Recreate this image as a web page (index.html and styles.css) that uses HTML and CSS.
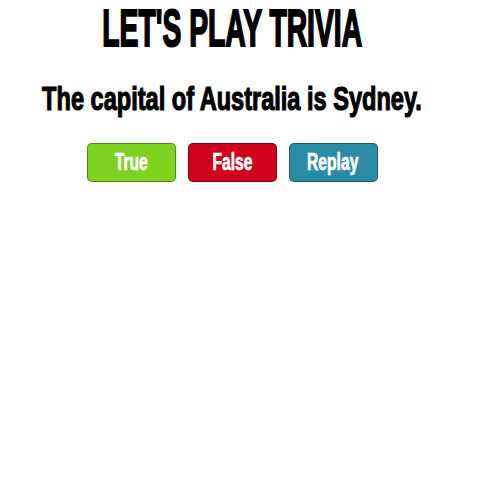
FILE: index.html
```html
<!DOCTYPE html>
<html>
<head>
<meta charset="utf-8">
<link rel="stylesheet" href="styles.css">
</head>
<body>
<main class="game">
  <h1 class="title"><span class="squeeze">LET'S PLAY TRIVIA</span></h1>
  <p class="question"><span class="squeeze">The capital of Australia is Sydney.</span></p>
  <div class="actions">
    <button class="btn btn-true"><span class="squeeze">True</span></button>
    <button class="btn btn-false"><span class="squeeze">False</span></button>
    <button class="btn btn-replay"><span class="squeeze">Replay</span></button>
  </div>
</main>
</body>
</html>
```
FILE: styles.css
```css
html, body {
  margin: 0;
  padding: 0;
  background: #fff;
}
body {
  font-family: "Liberation Sans Narrow", "Liberation Sans", sans-serif;
  font-weight: bold;
}
.game {
  width: 464px;
  padding-top: 4px;
}
.squeeze {
  display: inline-block;
  transform: scaleX(0.7);
  transform-origin: center;
  white-space: nowrap;
}
.title {
  margin: 0;
  display: flex;
  justify-content: center;
  font-size: 51px;
  line-height: 50px;
  color: #000;
  -webkit-text-stroke: 2px #000;
}
.title .squeeze {
  transform: scaleX(0.555);
}
.question {
  margin: 24px 0 0;
  display: flex;
  justify-content: center;
  font-size: 34px;
  line-height: 40px;
  color: #000;
  -webkit-text-stroke: 1.2px #000;
}
.question .squeeze {
  transform: scaleX(0.693);
}
.actions {
  margin-top: 25px;
  display: flex;
  justify-content: center;
  gap: 12px;
}
.btn {
  width: 89px;
  height: 39px;
  border: 1px solid rgba(0, 0, 0, 0.35);
  border-radius: 5px;
  color: #fff;
  font-family: inherit;
  font-weight: bold;
  font-size: 23px;
  padding: 0;
  -webkit-text-stroke: 0.7px #fff;
}
.btn .squeeze {
  transform: scaleX(0.68);
}
.btn-true { background: #7ed321; }
.btn-false { background: #d0021b; }
.btn-replay { background: #2a8ca4; }
```
